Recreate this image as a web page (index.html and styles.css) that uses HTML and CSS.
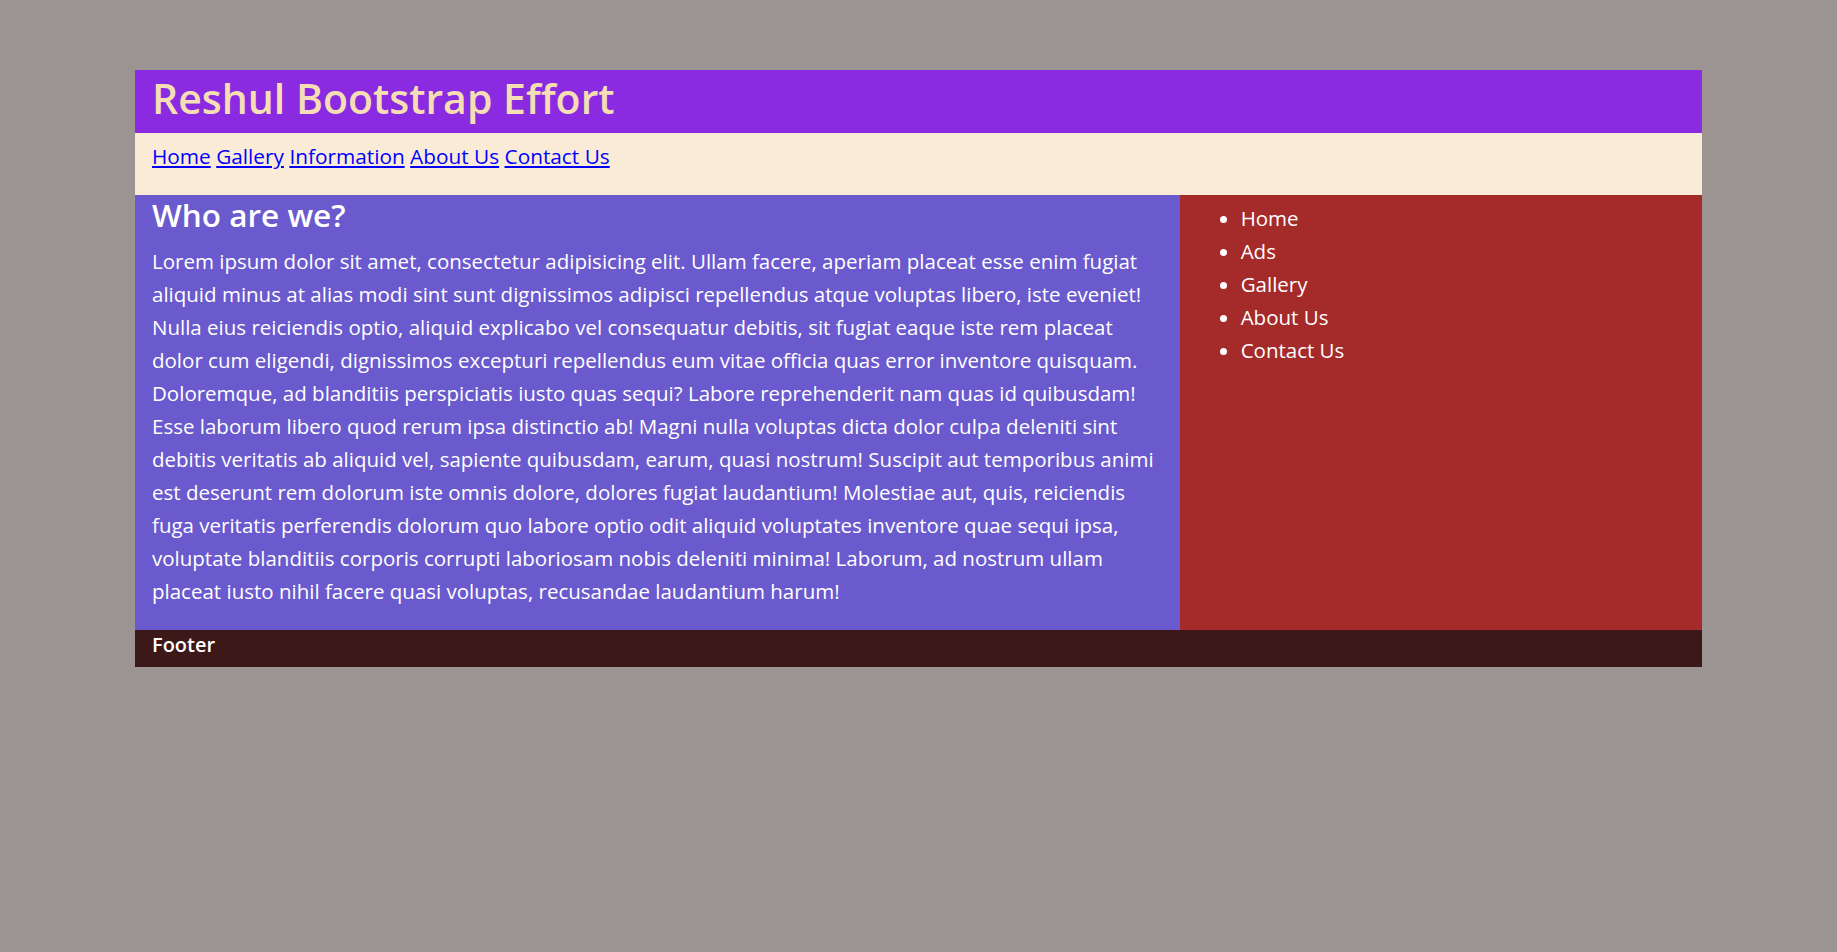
FILE: index.html
```html
<!DOCTYPE html>
<html lang="en">
<head>
<meta charset="utf-8">
<title>Reshul Bootstrap Effort</title>
<link rel="stylesheet" href="styles.css">
</head>
<body>
<div class="page">
  <header class="site-header">
    <h1 class="site-title">Reshul Bootstrap Effort</h1>
  </header>
  <nav class="top-nav">
    <a href="#">Home</a> <a href="#">Gallery</a> <a href="#">Information</a> <a href="#">About Us</a> <a href="#">Contact Us</a>
  </nav>
  <div class="content-row">
    <main class="main-col">
      <h2 class="section-title">Who are we?</h2>
      <p class="section-text">Lorem ipsum dolor sit amet, consectetur adipisicing elit. Ullam facere, aperiam placeat esse enim fugiat aliquid minus at alias modi sint sunt dignissimos adipisci repellendus atque voluptas libero, iste eveniet! Nulla eius reiciendis optio, aliquid explicabo vel consequatur debitis, sit fugiat eaque iste rem placeat dolor cum eligendi, dignissimos excepturi repellendus eum vitae officia quas error inventore quisquam. Doloremque, ad blanditiis perspiciatis iusto quas sequi? Labore reprehenderit nam quas id quibusdam! Esse laborum libero quod rerum ipsa distinctio ab! Magni nulla voluptas dicta dolor culpa deleniti sint debitis veritatis ab aliquid vel, sapiente quibusdam, earum, quasi nostrum! Suscipit aut temporibus animi est deserunt rem dolorum iste omnis dolore, dolores fugiat laudantium! Molestiae aut, quis, reiciendis fuga veritatis perferendis dolorum quo labore optio odit aliquid voluptates inventore quae sequi ipsa, voluptate blanditiis corporis corrupti laboriosam nobis deleniti minima! Laborum, ad nostrum ullam placeat iusto nihil facere quasi voluptas, recusandae laudantium harum!</p>
    </main>
    <aside class="side-col">
      <ul class="side-list">
        <li>Home</li>
        <li>Ads</li>
        <li>Gallery</li>
        <li>About Us</li>
        <li>Contact Us</li>
      </ul>
    </aside>
  </div>
  <footer class="site-footer">Footer</footer>
</div>
</body>
</html>
```
FILE: styles.css
```css
html, body {
  margin: 0;
  padding: 0;
}

body {
  background: #9b9492;
  font-family: "Open Sans", "Noto Sans", sans-serif;
  font-size: 20.5px;
  line-height: 33px;
  color: #ffffff;
}

.page {
  margin: 70px 135px 0;
}

.site-header {
  background: #8a2be2;
  padding: 3px 17px 10px;
}

.site-title {
  margin: 0;
  font-size: 41px;
  font-weight: 600;
  line-height: 50px;
  color: #f5deb3;
}

.top-nav {
  background: #faebd7;
  padding: 7px 17px 22px;
  font-size: 20.8px;
}

.top-nav a {
  color: #0000ff;
  text-decoration: underline;
}

.content-row {
  display: grid;
  grid-template-columns: 2fr 1fr;
}

.main-col {
  background: #6a5acd;
  padding: 0 17px 22px;
}

.section-title {
  margin: 0 0 11px;
  font-size: 31.5px;
  font-weight: 600;
  line-height: 39px;
}

.section-text {
  margin: 0;
}

.side-col {
  background: #a52a2a;
  padding: 7px 17px 0;
}

.side-list {
  margin: 0;
  padding-left: 44px;
}

.site-footer {
  background: #3c1818;
  padding: 2px 17px 9px;
  font-size: 20px;
  font-weight: 600;
  line-height: 26px;
}
```
